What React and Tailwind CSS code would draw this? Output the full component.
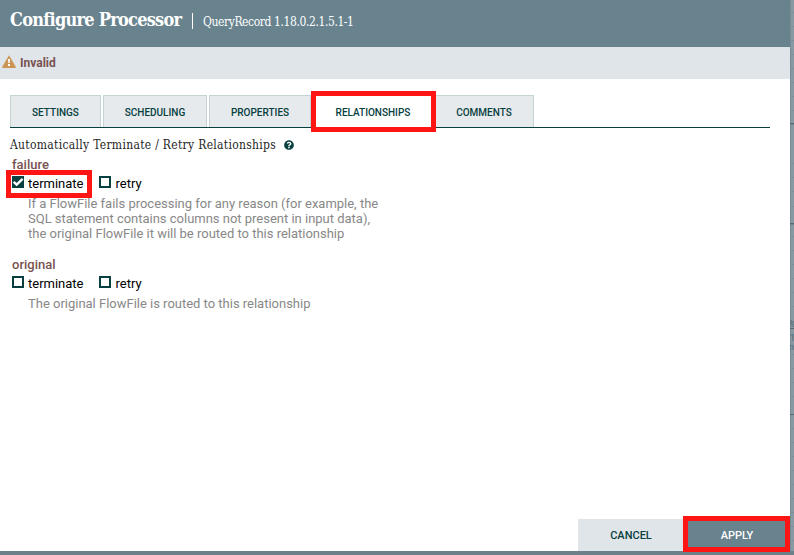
import { FaQuestionCircle } from "react-icons/fa";

const tabs = [
  { label: "SETTINGS", cls: "w-[91px]" },
  { label: "SCHEDULING", cls: "w-[104px]" },
  { label: "PROPERTIES", cls: "w-[102px]" },
  { label: "RELATIONSHIPS", cls: "w-[120px] z-10", active: true },
  { label: "COMMENTS", cls: "w-[99px] pr-[1px]" },
];

const slab = "font-['Roboto_Slab','DejaVu_Serif_Condensed','DejaVu_Serif',serif] [font-stretch:condensed]";

function WarningIcon() {
  return (
    <svg className="mb-[3px] h-[13px] w-[14px] shrink-0" viewBox="0 0 14 13">
      <path d="M7 0.3 13.9 12.1Q13.9 13 13.1 13H0.9Q0.1 13 0.1 12.1Z" fill="#cb9555" />
      <path d="M6 4h2l-.3 4h-1.4zM6 9h2v2H6z" fill="#fff" />
    </svg>
  );
}

function Checkbox({ checked }) {
  if (checked) {
    return (
      <svg className="h-3 w-3 shrink-0" viewBox="0 0 12 12">
        <path d="M0 0h12v12H0z" fill="#07403f" />
        <path d="M1.6 5.8 4.7 8.7 10.6 2.8" fill="none" stroke="#fff" strokeWidth="2.4" />
      </svg>
    );
  }
  return <div className="h-3 w-3 shrink-0 border-2 border-[#07403f] bg-white" />;
}

function Relationship({ name, checked, description }) {
  return (
    <div className="h-[100px] text-[13px] leading-[15px]">
      <div className="h-[15px] font-medium text-[#775351]">{name}</div>
      <div className="flex h-6 items-start pt-1 text-black">
        <div className="relative flex w-[87px] gap-1">
          <Checkbox checked={checked} />
          <span>terminate</span>
          {checked && <div className="absolute -left-[6px] -top-[6px] h-[28px] w-[86px] border-[5px] border-[#ff1513]" />}
        </div>
        <div className="flex gap-[4.5px]">
          <Checkbox />
          <span>retry</span>
        </div>
      </div>
      <div className="ml-4 w-[370px] whitespace-pre-line tracking-[-0.01px] text-[#888]">{description}</div>
    </div>
  );
}

// Sliver of the dimmed canvas visible to the right of the dialog
function CanvasEdge() {
  const lines = [12, 26, 40, 54, 68, 82, 96, 110, 163, 177, 191, 206, 236, 250, 264, 278, 292, 306, 354, 368, 382, 396, 428, 442, 456, 470, 484, 498, 512, 526, 540];
  return (
    <svg className="h-[551px] w-1 shrink-0 overflow-hidden" viewBox="0 0 4 551">
      <path d="M0 0h4v551H0z" fill="#8799a2" />
      <path d="M0 0h1v551H0z" fill="#788b94" />
      {lines.map((y) => (
        <path key={y} d={`M0 ${y}h4v1H0z`} fill="#7b8f99" />
      ))}
      <path d="M0 123h4v1H0zM0 223h4v1H0zM0 328h4v1H0zM0 414h4v1H0z" fill="#586b73" />
      <path d="M0 124h4v1H0zM0 224h4v1H0z" fill="#72858d" />
      <g fill="#52666f" className="font-['Roboto',sans-serif] text-[9px]">
        <text x="-1" y="327">%</text>
        <text x="0" y="341">1</text>
        <text x="-1" y="350">n</text>
      </g>
    </svg>
  );
}

export default function App() {
  return (
    <div className="relative flex h-[555px] w-[794px] flex-col overflow-hidden bg-[#6c8089] font-['Roboto',sans-serif]">
      <div className="flex h-[551px]">
        <div className="flex h-[551px] w-[790px] shrink-0 flex-col bg-white">
          <header className="flex h-[47px] items-start bg-[#68838e] text-white">
            <div className={`${slab} ml-[10px] mt-[8px] w-[182px] whitespace-nowrap text-[18px] font-bold leading-6 tracking-[-0.74px]`}>Configure Processor</div>
            <div className="mt-[13px] h-4 w-px bg-white" />
            <div className={`${slab} ml-[10px] mt-[14px] whitespace-nowrap text-[12px] leading-4 tracking-[-0.41px]`}>QueryRecord 1.18.0.2.1.5.1-1</div>
          </header>
          <div className="flex h-8 items-center gap-1 bg-[#e0e5e9] pl-[2px] text-[12px] font-bold text-[#775351]">
            <WarningIcon />
            <span>Invalid</span>
          </div>
          <main className="flex flex-1 flex-col px-[10px] pt-4">
            <div className="flex h-[33px] w-[760px] items-start gap-[2px] border-b border-[#07403f]">
              {tabs.map((tab) => (
                <div
                  key={tab.label}
                  className={`${tab.cls} relative flex h-8 shrink-0 items-center justify-center border border-b-0 pt-[2px] text-[10px] font-medium text-[#07403f] ${tab.active ? "border-white bg-white" : "border-[#c4d4d5] bg-[#e6eaed]"}`}
                >
                  {tab.label}
                  {tab.active && <div className="absolute -left-[3px] -top-[5px] h-[41px] w-[125px] border-[5px] border-[#ff1513]" />}
                </div>
              ))}
            </div>
            <div className="flex h-[29px] items-start gap-2 pt-[9px]">
              <div className={`${slab} w-[266px] whitespace-nowrap text-[12px] leading-4 tracking-[0.3px] text-[#262626]`}>Automatically Terminate / Retry Relationships</div>
              <FaQuestionCircle className="mt-[3px] h-[10px] w-[10px] text-[#07403f]" />
            </div>
            <div className="px-[2px]">
              <Relationship name="failure" checked description={"If a FlowFile fails processing for any reason (for example, the\nSQL statement contains columns not present in input data),\nthe original FlowFile it will be routed to this relationship"} />
              <Relationship name="original" description="The original FlowFile is routed to this relationship" />
            </div>
          </main>
          <footer className="flex h-8 justify-end text-[11px] font-medium">
            <div className="flex w-[106px] items-center justify-center bg-[#e0e5e9] pt-[2px] text-[#07403f]">CANCEL</div>
            <div className="relative flex w-[106px] items-center justify-center bg-[#68838e] pt-[2px] text-white">
              APPLY
              <div className="absolute -left-[1px] -top-[3px] h-[36px] w-[107px] border-[5px] border-[#ff1513]" />
            </div>
          </footer>
        </div>
        <CanvasEdge />
      </div>
    </div>
  );
}
